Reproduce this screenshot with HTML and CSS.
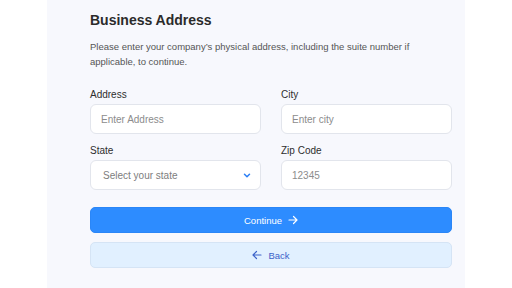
FILE: index.html
```html
<!DOCTYPE html>
<html lang="en">
<head>
    <meta charset="UTF-8">
    <meta name="viewport" content="width=device-width, initial-scale=1.0">
    <title>Business Address</title>
    <link rel="stylesheet" href="styles.css">
</head>
<body>
    <div class="panel">
        <h2>Business Address</h2>
        <p class="intro">Please enter your company’s physical address, including the suite number if applicable, to continue.</p>
        <form class="address-form">
            <div class="field">
                <label for="address">Address</label>
                <input id="address" type="text" placeholder="Enter Address">
            </div>
            <div class="field">
                <label for="city">City</label>
                <input id="city" type="text" placeholder="Enter city">
            </div>
            <div class="field">
                <label for="state">State</label>
                <div class="select-wrap">
                    <select id="state">
                        <option>Select your state</option>
                    </select>
                    <svg class="chevron" width="8" height="5" viewBox="0 0 8 5"><path d="M1.5 1.2l2.5 2.5 2.5-2.5" fill="none" stroke="#2b7ff5" stroke-width="1.5" stroke-linecap="round" stroke-linejoin="round"/></svg>
                </div>
            </div>
            <div class="field">
                <label for="zip">Zip Code</label>
                <input id="zip" type="text" placeholder="12345">
            </div>
        </form>
        <button class="btn btn-primary" type="button">
            Continue
            <svg width="10" height="10" viewBox="0 0 10 10"><path d="M1 5h8M5.5 1.5L9 5 5.5 8.5" fill="none" stroke="#fff" stroke-width="1.2" stroke-linecap="round" stroke-linejoin="round"/></svg>
        </button>
        <button class="btn btn-back" type="button">
            <svg width="10" height="10" viewBox="0 0 10 10"><path d="M9 5H1M4.5 1.5L1 5l3.5 3.5" fill="none" stroke="#3d63c9" stroke-width="1.2" stroke-linecap="round" stroke-linejoin="round"/></svg>
            Back
        </button>
    </div>
</body>
</html>
```

FILE: styles.css
```css
body {
    margin: 0;
    background: #fff;
    font-family: "Liberation Sans", Arial, sans-serif;
}
.panel {
    margin-left: 47px;
    width: 418px;
    min-height: 100vh;
    box-sizing: border-box;
    padding: 11px 13px 0 43px;
    background: #f7f8fd;
}
.panel h2 {
    margin: 0;
    font-size: 14px;
    line-height: 18px;
    font-weight: bold;
    color: #2b2b2b;
}
.intro {
    margin: 10px 0 19px;
    font-size: 9.5px;
    line-height: 15px;
    color: #555;
}
.address-form {
    display: grid;
    grid-template-columns: 1fr 1fr;
    column-gap: 20px;
    row-gap: 10px;
}
.field {
    display: flex;
    flex-direction: column;
}
.field label {
    font-size: 10px;
    line-height: 13px;
    color: #2e2e2e;
    margin-bottom: 3px;
}
.field input,
.field select {
    height: 30px;
    box-sizing: border-box;
    border: 1px solid #e2e5ec;
    border-radius: 6px;
    background: #fff;
    padding: 0 10px;
    font-family: inherit;
    font-size: 10px;
    color: #333;
    outline: none;
}
.field input::placeholder {
    color: #8c8c8c;
}
.select-wrap {
    position: relative;
}
.field select {
    width: 100%;
    appearance: none;
    padding-left: 12px;
    color: #7d7d7d;
}
.chevron {
    position: absolute;
    right: 10px;
    top: 13px;
}
.btn {
    display: flex;
    align-items: center;
    justify-content: center;
    gap: 6px;
    width: 100%;
    height: 26px;
    border-radius: 5px;
    font-family: inherit;
    font-size: 9.5px;
    cursor: pointer;
}
.btn-primary {
    margin-top: 17px;
    background: #2d8cff;
    border: 1px solid #2a86f7;
    color: #fff;
}
.btn-back {
    margin-top: 9px;
    background: #e1f0ff;
    border: 1px solid #d5e4f5;
    color: #3d63c9;
}
```
